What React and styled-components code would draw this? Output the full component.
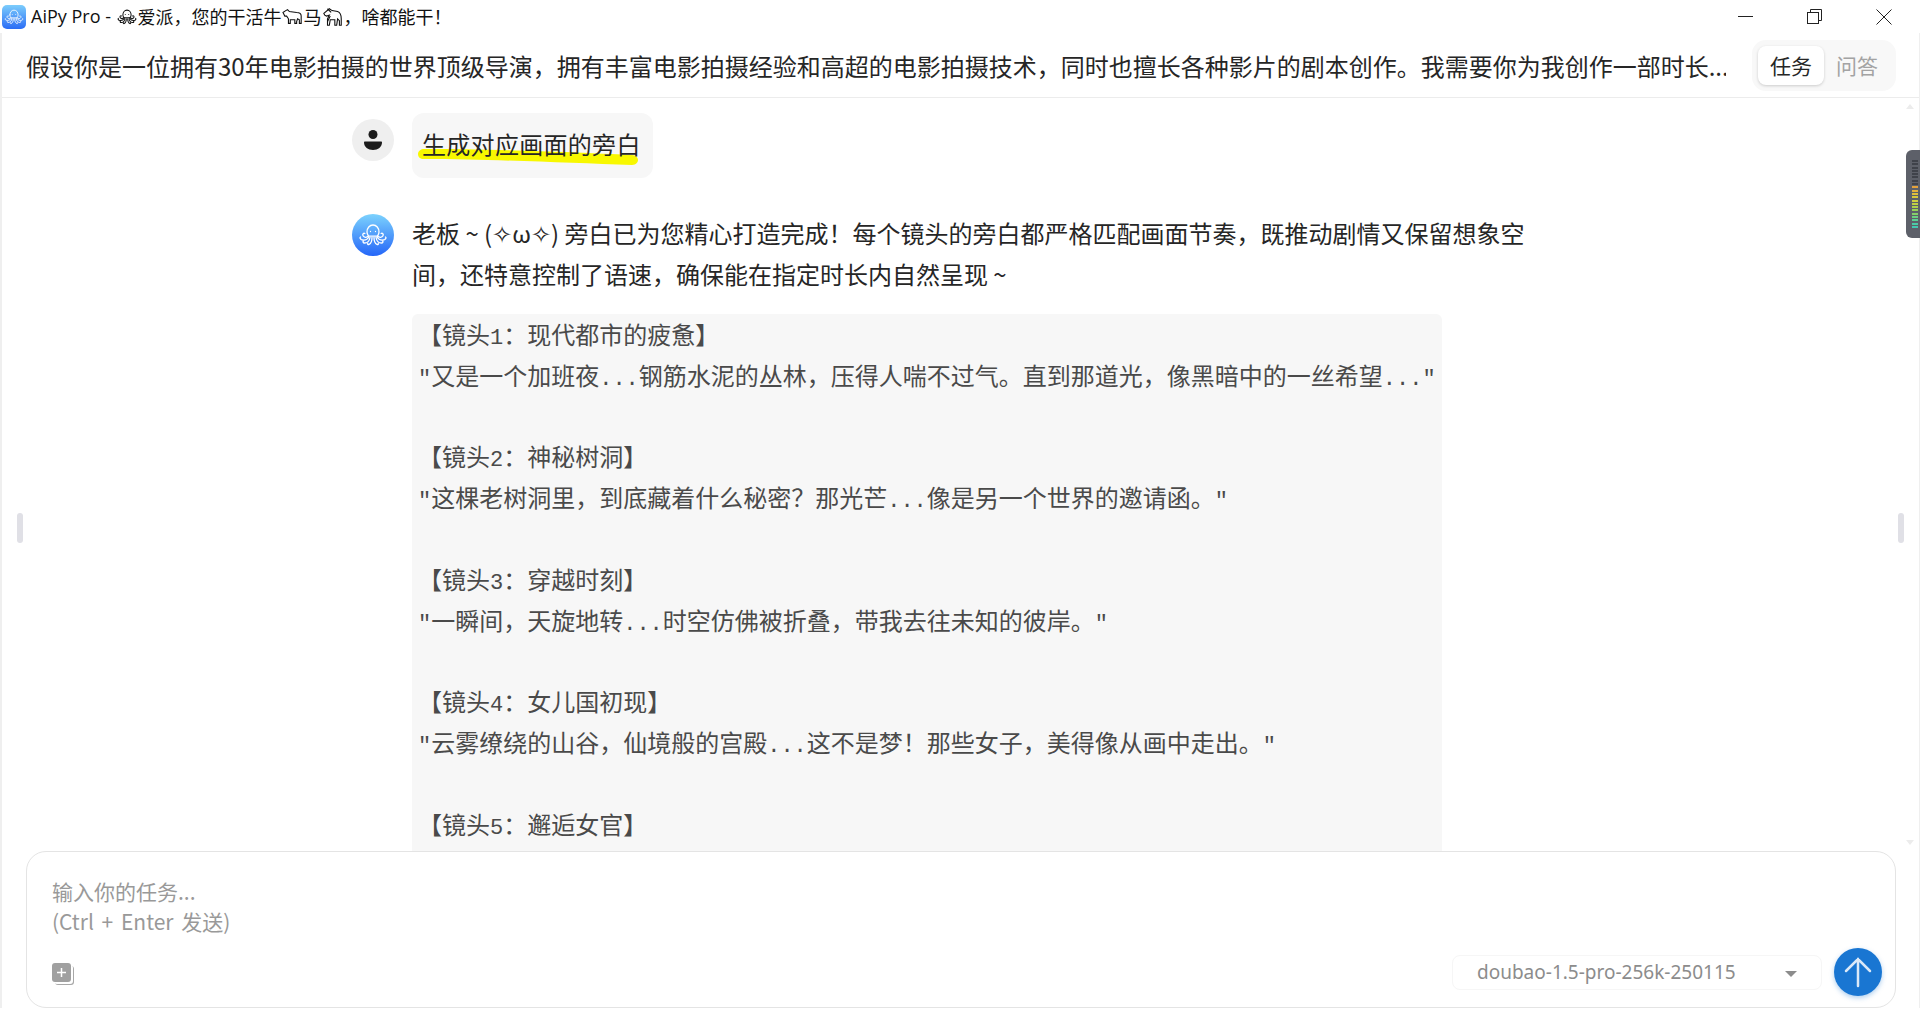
import React from 'react'
import styled, { createGlobalStyle } from 'styled-components'

const GlobalStyle = createGlobalStyle`
  html, body {
    margin: 0;
    padding: 0;
    background: #fff;
  }
  body {
    font-family: "Noto Sans CJK SC", "Noto Sans", sans-serif;
    overflow: hidden;
  }
`

const Window = styled.div`
  position: relative;
  width: 1920px;
  height: 1020px;
  display: flex;
  flex-direction: column;
  overflow: hidden;
  background: #fff;
`

const TitleBar = styled.div`
  height: 33px;
  flex: none;
  display: flex;
  align-items: center;
  padding: 0 28px 0 2px;
  font-size: 18px;
  color: #111;
`

const AppIcon = styled.div`
  width: 24px;
  height: 24px;
  border-radius: 5px;
  background: linear-gradient(180deg, #7ccdfc 0%, #2a6cf5 100%);
  display: flex;
  align-items: center;
  justify-content: center;
  margin-right: 5px;
`

const TitleText = styled.span`
  display: flex;
  align-items: center;
  white-space: pre;
  line-height: 33px;
`

const TitleLatin = styled.span`
  font-family: "Open Sans", sans-serif;
  font-size: 18px;
`

const WinControls = styled.div`
  margin-left: auto;
  display: flex;
  align-items: center;
  gap: 54px;
`

const Body = styled.div`
  flex: 1;
  min-height: 0;
  display: flex;
  flex-direction: column;
  border-left: 2px solid #efefef;
  border-right: 1px solid #efefef;
  margin-bottom: 12px;
`

const Header = styled.div`
  height: 64px;
  flex: none;
  display: flex;
  align-items: center;
  padding: 0 23px 0 24px;
  border-bottom: 1px solid #ececec;
`

const Topic = styled.div`
  flex: 1;
  min-width: 0;
  font-size: 24px;
  color: #262626;
  white-space: nowrap;
  overflow: hidden;
`

const Tabs = styled.div`
  display: flex;
  padding: 6px;
  background: #f8f8f8;
  border-radius: 14px;
  margin-left: 26px;
`

const Tab = styled.div`
  width: 66px;
  height: 39px;
  border-radius: 8px;
  display: flex;
  align-items: center;
  justify-content: center;
  font-size: 21px;
  color: ${p => (p.$active ? '#262626' : '#a3a3a3')};
  background: ${p => (p.$active ? '#fff' : 'transparent')};
  box-shadow: ${p => (p.$active ? '0 1px 3px rgba(0,0,0,.18)' : 'none')};
`

const Chat = styled.div`
  flex: 1;
  min-height: 0;
  overflow: hidden;
  padding: 15px 0 0 350px;
  display: flex;
  flex-direction: column;
  gap: 34px;
`

const Row = styled.div`
  display: flex;
  align-items: flex-start;
  gap: 18px;
`

const Avatar = styled.div`
  width: 42px;
  height: 42px;
  flex: none;
  border-radius: 50%;
  margin-top: ${p => p.$top || 0}px;
  display: flex;
  align-items: center;
  justify-content: center;
  background: ${p => (p.$bot ? 'linear-gradient(180deg, #7cd2fd 0%, #2566f8 100%)' : '#efefef')};
`

const Bubble = styled.div`
  position: relative;
  padding: 10px 12px 14px 10px;
  background: #f7f7f7;
  border-radius: 12px;
  font-size: 24px;
  letter-spacing: .3px;
  line-height: 41px;
  color: #262626;
`

const Marker = styled.svg`
  position: absolute;
  left: 6px;
  top: 35px;
  width: 220px;
  height: 17px;
`

const BubbleText = styled.span`
  position: relative;
`

const Answer = styled.div`
  width: 1120px;
`

const Para = styled.p`
  margin: 0;
  font-size: 24px;
  line-height: 41px;
  color: #262626;
`

const Code = styled.pre`
  margin: 20px 0 0;
  width: 1030px;
  padding: 0 0 80px 6px;
  box-sizing: border-box;
  background: #f7f7f7;
  border-radius: 6px;
  font-family: "Noto Sans CJK SC", sans-serif;
  font-size: 24px;
  line-height: 40.8px;
  color: #4a4a4a;
  white-space: pre;
`

const Mono = styled.span`
  font-family: "Liberation Mono", monospace;
  font-size: 22px;
  line-height: 0;
`

const Composer = styled.div`
  flex: none;
  height: 157px;
  margin: 0 23px 0 24px;
  box-sizing: border-box;
  border: 1.5px solid #e4e4e4;
  border-radius: 20px;
  background: #fff;
  padding: 24px 13px 11px 25px;
  display: flex;
  flex-direction: column;
  justify-content: space-between;
`

const Placeholder = styled.div`
  font-size: 21px;
  line-height: 30px;
  word-spacing: 3px;
  color: #999;
`

const ComposerBar = styled.div`
  display: flex;
  align-items: center;
  gap: 12px;
`

const AddFile = styled.div`
  position: relative;
  width: 19px;
  height: 19px;
  margin-right: auto;
  border-radius: 3px;
  background: #a0a0a0;
  box-shadow: 2px 2px 0 0 #fff, 3px 3px 0 0 #a8a8a8;
  color: #fff;
  display: flex;
  align-items: center;
  justify-content: center;
`

const ModelSelect = styled.div`
  width: 370px;
  height: 35px;
  box-sizing: border-box;
  display: flex;
  align-items: center;
  justify-content: space-between;
  padding: 0 24px;
  border: 1px solid #f6f6f6;
  border-radius: 8px;
  font-family: "Noto Sans", sans-serif;
  font-size: 19px;
  color: #8c8c8c;
`

const Caret = styled.span`
  width: 0;
  height: 0;
  border-left: 6px solid transparent;
  border-right: 6px solid transparent;
  border-top: 6px solid #8c8c8c;
  margin-top: 4px;
`

const SendButton = styled.div`
  width: 48px;
  height: 48px;
  border-radius: 50%;
  background: #1976d2;
  box-shadow: 0 2px 5px rgba(25, 118, 210, .35);
  display: flex;
  align-items: center;
  justify-content: center;
`

const ScrollArrow = styled.span`
  position: absolute;
  right: 6px;
  top: ${p => p.$top}px;
  width: 0;
  height: 0;
  border-left: 4px solid transparent;
  border-right: 4px solid transparent;
  ${p => (p.$up ? 'border-bottom: 5px solid #ececec;' : 'border-top: 5px solid #ececec;')}
`

const SideHandle = styled.span`
  position: absolute;
  top: 513px;
  width: 6px;
  height: 30px;
  border-radius: 3px;
  background: #e0e0e6;
  ${p => (p.$right ? 'right: 16px;' : 'left: 17px;')}
`

const Meter = styled.div`
  position: absolute;
  right: 0;
  top: 150px;
  width: 14px;
  height: 88px;
  box-sizing: border-box;
  padding: 10px 2px 10px 6px;
  background: #5d6069;
  border-radius: 6px 0 0 6px;
  display: flex;
  flex-direction: column;
  justify-content: space-between;
`

const MeterTick = styled.i`
  display: block;
  height: 2px;
  background: ${p => p.$color};
`

const meterColors = [
  '#3f424a', '#3f424a', '#3f424a', '#3f424a', '#3f424a', '#3f424a', '#3f424a', '#3f424a',
  '#e3a23c', '#e3b23c', '#e0c03c', '#d8c83c', '#cfcf40', '#c0d044', '#aed04c', '#98d058',
  '#84d06a', '#6cd080', '#5ccf94', '#4ccba4', '#44c7b0',
]

const Octopus = ({ size = 26, color = '#fff', width = 1.3 }) => (
  <svg width={size} height={size} viewBox="0 0 32 32" fill="none" stroke={color} strokeWidth={width} strokeLinecap="round">
    <path d="M10 13c0-4 2.600-7 6-7s6 3 6 7c0 2-1 3.200-1.600 4.200H11.600C11 16.200 10 15 10 13z" />
    <path d="M13.500 12.500h.01M18.500 12.500h.01" />
    <path d="M11.500 17c-2 2-4.500 1.500-5.500-.3-.8-1.500.6-3 1.900-2.200M20.500 17c2 2 4.500 1.500 5.500-.3.8-1.500-.6-3-1.900-2.200" />
    <path d="M12 18c-2 3-5 3.500-7.500 2.600C3 20 2.600 18.500 3.500 18M20 18c2 3 5 3.500 7.500 2.600 1.500-.6 1.900-2.100 1-2.600" />
    <path d="M13 18.500c-.6 3.500-3 5.500-5.500 5.500-1.400 0-2-1.500-1-2M19 18.500c.6 3.500 3 5.500 5.500 5.500 1.400 0 2-1.500 1-2" />
    <path d="M15 18.500c0 3-1 6-3 7-1 .4-1.800-.5-1.200-1.200M17 18.500c0 3 1 6 3 7 1 .4 1.800-.5 1.200-1.200" />
  </svg>
)

const Ox = () => (
  <svg width="22" height="20" viewBox="0 0 24 22" fill="none" stroke="#111" strokeWidth="1.200">
    <path d="M1 6l3-2 2-1 2 2 8 1c3 0 5 1 5 4v8h-2v-4l-2-1-1 3v2h-2v-4H9v4H7v-5L5 10H3z" />
  </svg>
)

const Horse = () => (
  <svg width="22" height="22" viewBox="0 0 24 24" fill="none" stroke="#111" strokeWidth="1.200">
    <path d="M2 8l6-5 3 2 6 1c3 1 4 4 4 8v7h-2v-5l-2-2-1 7h-2v-6H9l-1 6H6v-7l2-4-3 1-2-1z" />
    <path d="M6 3l4 4M9 11l-3 6" />
  </svg>
)

const Minimize = () => (
  <svg width="15" height="15" viewBox="0 0 15 15" fill="none" stroke="#222" strokeWidth="1">
    <path d="M0 7.500h15" />
  </svg>
)

const Restore = () => (
  <svg width="15" height="15" viewBox="0 0 15 15" fill="none" stroke="#222" strokeWidth="1">
    <rect x=".5" y="3.500" width="11" height="11" />
    <path d="M3.500 3.500v-3h11v11h-3" />
  </svg>
)

const CloseIcon = () => (
  <svg width="16" height="16" viewBox="0 0 16 16" fill="none" stroke="#222" strokeWidth="1">
    <path d="M.5.500l15 15M15.500.500l-15 15" />
  </svg>
)

const UserGlyph = () => (
  <svg width="18" height="22" viewBox="0 0 18 22" fill="#1c1c1c">
    <circle cx="9" cy="5.500" r="4.500" />
    <path d="M1 12.500h16c.6 0 1 .4 1 1C18 18 14 21 9 21S0 18 0 13.500c0-.6.400-1 1-1z" />
  </svg>
)

const SendArrow = () => (
  <svg width="28" height="32" viewBox="0 0 28 32" fill="none" stroke="#dbe9f8" strokeWidth="2.500" strokeLinecap="round">
    <path d="M14 30V3M2 15L14 3l12 12" />
  </svg>
)

// full-width punctuation is written as escapes so it can't get flattened to ascii
const narration = [
  ['【镜头1\uFF1A现代都市的疲惫】', '"又是一个加班夜...钢筋水泥的丛林\uFF0C压得人喘不过气。直到那道光\uFF0C像黑暗中的一丝希望..."'],
  ['【镜头2\uFF1A神秘树洞】', '"这棵老树洞里\uFF0C到底藏着什么秘密\uFF1F那光芒...像是另一个世界的邀请函。"'],
  ['【镜头3\uFF1A穿越时刻】', '"一瞬间\uFF0C天旋地转...时空仿佛被折叠\uFF0C带我去往未知的彼岸。"'],
  ['【镜头4\uFF1A女儿国初现】', '"云雾缭绕的山谷\uFF0C仙境般的宫殿...这不是梦\uFF01那些女子\uFF0C美得像从画中走出。"'],
  ['【镜头5\uFF1A邂逅女官】', ''],
]

const topic = '假设你是一位拥有30年电影拍摄的世界顶级导演\uFF0C拥有丰富电影拍摄经验和高超的电影拍摄技术\uFF0C同时也擅长各种影片的剧本创作。我需要你为我创作一部时长...'
const intro = '老板 ~ (✧ω✧) 旁白已为您精心打造完成\uFF01每个镜头的旁白都严格匹配画面节奏\uFF0C既推动剧情又保留想象空间\uFF0C还特意控制了语速\uFF0C确保能在指定时长内自然呈现 ~'

// ascii runs sit in the mono face, the rest stays in the CJK one
const mixed = line =>
  line.split(/([\x20-\x7e]+)/).map((part, i) => (i % 2 ? <Mono key={i}>{part}</Mono> : part))

export default function App() {
  return (
    <Window>
      <GlobalStyle />
      <TitleBar>
        <AppIcon>
          <Octopus size={22} width={1.200} />
        </AppIcon>
        <TitleText>
          <TitleLatin>AiPy Pro - </TitleLatin>
          <Octopus size={22} color="#111" width={1.500} />
          {'爱派\uFF0C您的干活牛'}
          <Ox />马<Horse />
          {'\uFF0C啥都能干\uFF01'}
        </TitleText>
        <WinControls>
          <Minimize />
          <Restore />
          <CloseIcon />
        </WinControls>
      </TitleBar>

      <Body>
        <Header>
          <Topic>{topic}</Topic>
          <Tabs>
            <Tab $active>任务</Tab>
            <Tab>问答</Tab>
          </Tabs>
        </Header>

        <Chat>
          <Row>
            <Avatar $top={6}>
              <UserGlyph />
            </Avatar>
            <Bubble>
              <Marker viewBox="0 0 220 17" preserveAspectRatio="none">
                <path d="M6 1C70 1 150 4 214 7c4 0 6 3 6 5s-2 5-6 5C150 15 70 11 6 11 2 11 0 9 0 6s3-5 6-5z" fill="#f8f800" />
              </Marker>
              <BubbleText>生成对应画面的旁白</BubbleText>
            </Bubble>
          </Row>

          <Row>
            <Avatar $bot $top={2}>
              <Octopus size={32} />
            </Avatar>
            <Answer>
              <Para>{intro}</Para>
              <Code>
                {narration.map(([head, line]) => (
                  <React.Fragment key={head}>
                    {mixed(head)}
                    {'\n'}
                    {line && mixed(line)}
                    {line && '\n\n'}
                  </React.Fragment>
                ))}
              </Code>
            </Answer>
          </Row>
        </Chat>

        <Composer>
          <Placeholder>
            输入你的任务...
            <br />
            (Ctrl + Enter 发送)
          </Placeholder>
          <ComposerBar>
            <AddFile>
              <svg width="11" height="11" viewBox="0 0 11 11" stroke="#fff" strokeWidth="1.500">
                <path d="M5.500 1v9M1 5.500h9" />
              </svg>
            </AddFile>
            <ModelSelect>
              doubao-1.5-pro-256k-250115
              <Caret />
            </ModelSelect>
            <SendButton>
              <SendArrow />
            </SendButton>
          </ComposerBar>
        </Composer>
      </Body>

      <ScrollArrow $up $top={104} />
      <ScrollArrow $top={840} />
      <SideHandle />
      <SideHandle $right />
      <Meter>
        {meterColors.map((c, i) => (
          <MeterTick key={i} $color={c} />
        ))}
      </Meter>
    </Window>
  )
}
